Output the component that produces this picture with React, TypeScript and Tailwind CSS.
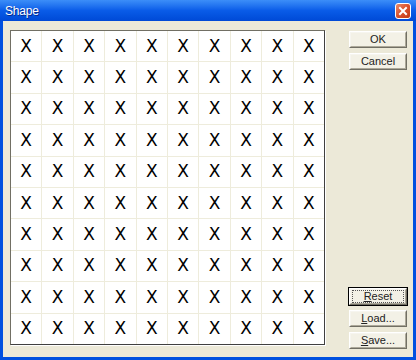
import type { ReactNode } from 'react';

const ui = { fontFamily: '"Liberation Sans", Arial, sans-serif' };

function Btn({ children, def }: { children: ReactNode; def?: boolean }) {
  return (
    <div className={def ? 'border border-black' : 'border border-transparent'}>
      <div className="border border-t-white border-l-white border-r-[#716f64] border-b-[#716f64]">
        <div className="border border-t-[#f6f5ef] border-l-[#f6f5ef] border-r-[#aca899] border-b-[#aca899] bg-[#f3f1e6] h-[15px] flex items-center justify-center">
          <div
            className={
              def
                ? 'w-full h-full mx-[1px] border border-dotted border-[#555] flex items-center justify-center'
                : 'w-full h-full flex items-center justify-center'
            }
          >
            <span className="text-[11px] leading-none text-[#222]">{children}</span>
          </div>
        </div>
      </div>
    </div>
  );
}

export default function App() {
  const cells = Array.from({ length: 100 });

  return (
    <div className="w-[416px] h-[360px] bg-[#0050e0] flex flex-col" style={ui}>
      {/* Title bar */}
      <div className="h-[21px] shrink-0 flex items-center justify-between pl-[5px] pr-[5px] bg-gradient-to-b from-[#3c8ef8] via-[#0a5ce8] to-[#0049d6]">
        <span className="text-white text-[12px] tracking-[-0.2px] [text-shadow:1px_1px_0_#0a2a8a]">Shape</span>
        <div className="w-[16px] h-[16px] mt-[1px] rounded-[3px] border border-white bg-gradient-to-br from-[#e98a6a] via-[#d8502c] to-[#c13a14] flex items-center justify-center">
          <svg width="10" height="10" viewBox="0 0 10 10">
            <path d="M2 2 L8 8 M8 2 L2 8" stroke="white" strokeWidth="2" strokeLinecap="square" />
          </svg>
        </div>
      </div>

      {/* Body */}
      <div className="flex-1 mx-[3px] mb-[3px] bg-[#ece9d8] flex pl-[7px] pt-[9px] pr-[5px]">
        <div className="w-[315px] h-[315px] border border-t-[#716f64] border-l-[#716f64] border-r-[#404040] border-b-[#404040] shadow-[1px_1px_0_#fff]">
          <div className="grid grid-cols-10 gap-px bg-[#eeecdc] w-full h-full">
            {cells.map((_, i) => (
              <div key={i} className="bg-white flex items-center justify-center">
                <span className="text-[17px] leading-none text-black" style={{ fontFamily: '"DejaVu Sans", sans-serif' }}>
                  X
                </span>
              </div>
            ))}
          </div>
        </div>

        <div className="ml-auto w-[60px] flex flex-col">
          <div className="flex flex-col gap-[3px]">
            <Btn>OK</Btn>
            <Btn>Cancel</Btn>
          </div>
          <div className="mt-auto mb-[7px] flex flex-col gap-[3px]">
            <Btn def>
              <span className="underline">R</span>eset
            </Btn>
            <Btn>
              <span className="underline">L</span>oad...
            </Btn>
            <Btn>
              <span className="underline">S</span>ave...
            </Btn>
          </div>
        </div>
      </div>
    </div>
  );
}
